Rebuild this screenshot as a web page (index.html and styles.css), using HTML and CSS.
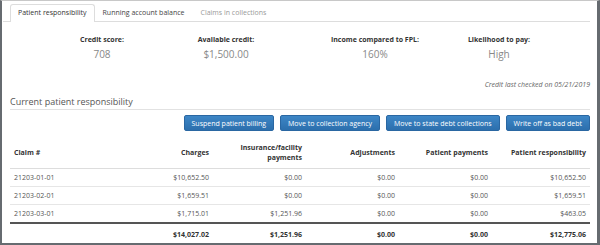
FILE: index.html
```html
<!DOCTYPE html>
<html lang="en">
<head>
  <meta charset="UTF-8">
  <title>Patient responsibility</title>
  <link rel="stylesheet" href="styles.css">
</head>
<body>
  <div class="frame">
    <ul class="tabs">
      <li class="tab active">Patient responsibility</li>
      <li class="tab">Running account balance</li>
      <li class="tab muted">Claims in collections</li>
    </ul>

    <div class="stats">
      <div class="stat">
        <div class="stat-label">Credit score:</div>
        <div class="stat-value">708</div>
      </div>
      <div class="stat">
        <div class="stat-label">Available credit:</div>
        <div class="stat-value">$1,500.00</div>
      </div>
      <div class="stat stat-wide">
        <div class="stat-label">Income compared to FPL:</div>
        <div class="stat-value">160%</div>
      </div>
      <div class="stat">
        <div class="stat-label">Likelihood to pay:</div>
        <div class="stat-value">High</div>
      </div>
    </div>

    <p class="checked">Credit last checked on 05/21/2019</p>

    <h2 class="section-title">Current patient responsibility</h2>

    <div class="actions">
      <button class="btn">Suspend patient billing</button>
      <button class="btn">Move to collection agency</button>
      <button class="btn">Move to state debt collections</button>
      <button class="btn">Write off as bad debt</button>
    </div>

    <table class="claims">
      <colgroup>
        <col class="col-claim">
        <col class="col-money">
        <col class="col-money">
        <col class="col-money">
        <col class="col-money">
        <col class="col-total">
      </colgroup>
      <thead>
        <tr>
          <th class="left">Claim #</th>
          <th>Charges</th>
          <th>Insurance/facility<br>payments</th>
          <th>Adjustments</th>
          <th>Patient payments</th>
          <th>Patient responsibility</th>
        </tr>
      </thead>
      <tbody>
        <tr>
          <td class="left">21203-01-01</td>
          <td>$10,652.50</td>
          <td>$0.00</td>
          <td>$0.00</td>
          <td>$0.00</td>
          <td>$10,652.50</td>
        </tr>
        <tr>
          <td class="left">21203-02-01</td>
          <td>$1,659.51</td>
          <td>$0.00</td>
          <td>$0.00</td>
          <td>$0.00</td>
          <td>$1,659.51</td>
        </tr>
        <tr>
          <td class="left">21203-03-01</td>
          <td>$1,715.01</td>
          <td>$1,251.96</td>
          <td>$0.00</td>
          <td>$0.00</td>
          <td>$463.05</td>
        </tr>
      </tbody>
      <tfoot>
        <tr>
          <td class="left"></td>
          <td>$14,027.02</td>
          <td>$1,251.96</td>
          <td>$0.00</td>
          <td>$0.00</td>
          <td>$12,775.06</td>
        </tr>
      </tfoot>
    </table>
  </div>
</body>
</html>
```

FILE: styles.css
```css
body {
  margin: 0;
  font-family: 'Open Sans', sans-serif;
  color: #555;
  background: #fff;
}

.frame {
  width: 600px;
  height: 245px;
  box-sizing: border-box;
  border: 2px solid #666b70;
  border-top: 1px solid #c8c8c8;
  border-right-width: 3px;
  padding: 3px 7px 0 8px;
  overflow: hidden;
}

.tabs {
  list-style: none;
  margin: 0 0 0 -7px;
  padding: 0 0 0 7px;
  display: flex;
  border-bottom: 1px solid #ddd;
  height: 17px;
}

.tab {
  font-size: 7px;
  line-height: 16px;
  padding: 0 7px;
  color: #444;
  border: 1px solid transparent;
  border-bottom: none;
}

.tab.active {
  background: #fff;
  border-color: #ddd;
  border-radius: 3px 3px 0 0;
  height: 17px;
  color: #333;
}

.tab.muted {
  color: #999;
}

.stats {
  display: flex;
  padding-left: 30px;
  margin-top: 13px;
}

.stat {
  width: 124px;
  text-align: center;
}

.stat-wide {
  margin-left: 25px;
}

.stat-label {
  font-size: 7px;
  font-weight: bold;
  line-height: 10px;
  color: #333;
}

.stat-value {
  font-size: 10px;
  line-height: 13px;
  margin-top: 3px;
  color: #888;
}

.checked {
  margin: 19px 0 0;
  text-align: right;
  font-size: 7px;
  font-style: italic;
  line-height: 10px;
  color: #666;
}

.section-title {
  margin: 6px 0 0;
  font-size: 9px;
  font-weight: normal;
  line-height: 12px;
  color: #555;
  padding-bottom: 1px;
  border-bottom: 1px solid #e2e2e2;
}

.actions {
  display: flex;
  justify-content: flex-end;
  gap: 6px;
  margin-top: 5px;
}

.btn {
  font-family: 'Open Sans', sans-serif;
  font-size: 7px;
  height: 16px;
  padding: 0 7px;
  color: #fff;
  background: linear-gradient(#3d86c6, #2c6fad);
  border: 1px solid #2a67a2;
  border-radius: 2px;
}

.claims {
  width: 100%;
  table-layout: fixed;
  border-collapse: collapse;
  margin-top: 8px;
  font-size: 7px;
}

.col-claim { width: 110px; }
.col-money { width: 93px; }
.col-total { width: 98px; }

.claims th {
  font-weight: bold;
  color: #333;
  text-align: right;
  line-height: 10px;
  padding: 4px 4px 5px;
  border-bottom: 1px solid #ddd;
}

.claims td {
  text-align: right;
  height: 17px;
  padding: 0 4px;
  border-bottom: 1px solid #e6e6e6;
}

.claims .left {
  text-align: left;
}

.claims tbody tr:last-child td {
  border-bottom: 2px solid #555;
}

.claims tfoot td {
  font-weight: bold;
  color: #333;
  border-bottom: none;
  height: 21px;
}
```
